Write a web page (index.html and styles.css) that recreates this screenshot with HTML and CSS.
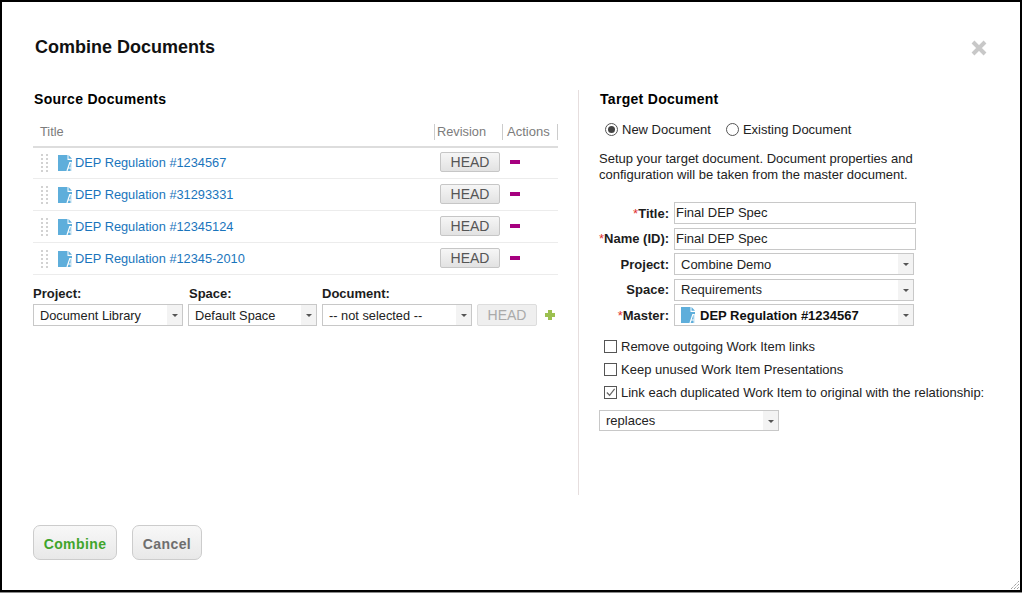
FILE: index.html
```html
<!DOCTYPE html>
<html lang="en">
<head>
<meta charset="utf-8">
<title>Combine Documents</title>
<link rel="stylesheet" href="styles.css">
</head>
<body>
<svg class="defs" width="0" height="0" aria-hidden="true">
  <symbol id="doc" viewBox="0 0 14 16">
    <path d="M0 0H9.500V5H14V16H0Z" fill="#5eaedb"/>
    <path d="M10.500 0L14 3.800H10.500Z" fill="#5eaedb"/>
    <path d="M9 16L11.800 7.500H13.200V16" fill="none" stroke="#fff" stroke-width="1.200"/>
    <path d="M10 13H13" stroke="#fff" stroke-width="1"/>
  </symbol>
  <symbol id="grip" viewBox="0 0 7 18">
    <path d="M0 0h2v2H0zM5 0h2v2H5zM0 4h2v2H0zM5 4h2v2H5zM0 8h2v2H0zM5 8h2v2H5zM0 12h2v2H0zM5 12h2v2H5zM0 16h2v2H0zM5 16h2v2H5z" fill="#d2d2d2"/>
  </symbol>
</svg>
<main class="dialog">
  <header class="dialog-head">
    <h1>Combine Documents</h1>
    <svg class="close" viewBox="0 0 16 16" width="16" height="16"><path d="M2 2L14 14M14 2L2 14" stroke="#c8c8c8" stroke-width="4"/></svg>
  </header>
  <div class="columns">
    <section class="source">
      <h2>Source Documents</h2>
      <div class="thead">
        <div class="th th-title">Title</div>
        <div class="th th-rev">Revision</div>
        <div class="th th-act">Actions</div>
      </div>
      <div class="row">
        <svg class="grip"><use href="#grip"/></svg>
        <svg class="doc"><use href="#doc"/></svg>
        <a class="doc-link">DEP Regulation #1234567</a>
        <span class="rev"><button class="head-btn">HEAD</button></span>
        <span class="act"><i class="minus"></i></span>
      </div>
      <div class="row">
        <svg class="grip"><use href="#grip"/></svg>
        <svg class="doc"><use href="#doc"/></svg>
        <a class="doc-link">DEP Regulation #31293331</a>
        <span class="rev"><button class="head-btn">HEAD</button></span>
        <span class="act"><i class="minus"></i></span>
      </div>
      <div class="row">
        <svg class="grip"><use href="#grip"/></svg>
        <svg class="doc"><use href="#doc"/></svg>
        <a class="doc-link">DEP Regulation #12345124</a>
        <span class="rev"><button class="head-btn">HEAD</button></span>
        <span class="act"><i class="minus"></i></span>
      </div>
      <div class="row">
        <svg class="grip"><use href="#grip"/></svg>
        <svg class="doc"><use href="#doc"/></svg>
        <a class="doc-link">DEP Regulation #12345-2010</a>
        <span class="rev"><button class="head-btn">HEAD</button></span>
        <span class="act"><i class="minus"></i></span>
      </div>
      <div class="adder">
        <div class="field f-project">
          <label>Project:</label>
          <div class="select"><span class="val">Document Library</span><span class="arrow"></span></div>
        </div>
        <div class="field f-space">
          <label>Space:</label>
          <div class="select"><span class="val">Default Space</span><span class="arrow"></span></div>
        </div>
        <div class="field f-doc">
          <label>Document:</label>
          <div class="select"><span class="val">-- not selected --</span><span class="arrow"></span></div>
        </div>
        <button class="head-btn disabled">HEAD</button>
        <svg class="plus" viewBox="0 0 10 10" width="10" height="10"><path d="M3 0H7V3H10V7H7V10H3V7H0V3H3Z" fill="#9cc050"/></svg>
      </div>
    </section>
    <section class="target">
      <h2>Target Document</h2>
      <div class="radios">
        <span class="radio on"></span><span class="radio-label">New Document</span>
        <span class="radio"></span><span class="radio-label">Existing Document</span>
      </div>
      <p class="intro">Setup your target document. Document properties and configuration will be taken from the master document.</p>
      <div class="form">
        <label><b>*</b>Title:</label>
        <div class="input">Final DEP Spec</div>
        <label><b>*</b>Name (ID):</label>
        <div class="input">Final DEP Spec</div>
        <label>Project:</label>
        <div class="select wide"><span class="val">Combine Demo</span><span class="arrow"></span></div>
        <label>Space:</label>
        <div class="select wide"><span class="val">Requirements</span><span class="arrow"></span></div>
        <label><b>*</b>Master:</label>
        <div class="select wide"><span class="val strong"><svg class="doc"><use href="#doc"/></svg>DEP Regulation #1234567</span><span class="arrow"></span></div>
      </div>
      <div class="checks">
        <div class="check"><span class="box"></span>Remove outgoing Work Item links</div>
        <div class="check"><span class="box"></span>Keep unused Work Item Presentations</div>
        <div class="check"><span class="box"><svg viewBox="0 0 12 12" width="11" height="11"><path d="M2 6L5 9L10.500 2" fill="none" stroke="#666" stroke-width="1.300"/></svg></span>Link each duplicated Work Item to original with the relationship:</div>
      </div>
      <div class="select rel"><span class="val">replaces</span><span class="arrow"></span></div>
    </section>
  </div>
  <footer class="actions">
    <button class="btn primary">Combine</button>
    <button class="btn">Cancel</button>
  </footer>
  <svg class="resize" viewBox="0 0 8 8" width="8" height="8"><path d="M0 8L8 0M3 8L8 3M6 8L8 6" stroke="#777" stroke-width="1" stroke-dasharray="1 1"/></svg>
</main>
</body>
</html>
```
FILE: styles.css
```css
* { box-sizing: border-box; }
html, body { margin: 0; padding: 0; }
body {
  width: 1022px;
  height: 593px;
  overflow: hidden;
  background: #8a8a8a;
  font-family: "Liberation Sans", Arial, sans-serif;
  font-size: 13px;
  color: #222;
}
.defs { position: absolute; }
.dialog {
  position: relative;
  width: 1022px;
  height: 592px;
  background: #fff;
  border: 2px solid #000;
  padding: 0 0 0 31px;
}
.dialog-head {
  display: flex;
  justify-content: space-between;
  align-items: center;
  height: 88px;
  padding: 0 33px 0 2px;
}
h1 {
  margin: 3px 0 0;
  font-size: 18px;
  font-weight: bold;
  color: #111;
}
.close { margin-top: 4px; }
h2 {
  margin: 0;
  font-size: 14px;
  font-weight: bold;
  letter-spacing: 0.300px;
  color: #000;
  line-height: 18px;
}
.columns { display: flex; height: 405px; }
.source {
  width: 525px;
  margin-right: 20px;
  font-size: 12.800px;
}
.source h2 { padding-left: 1px; font-size: 14px; }
.thead {
  display: flex;
  align-items: center;
  height: 38px;
  border-bottom: 2px solid #ddd;
  margin-top: 2px;
  color: #7c7c7c;
  padding-top: 9px;
  padding-bottom: 1px;
}
.th { height: 16px; line-height: 16px; }
.th-title { width: 401px; padding-left: 7px; }
.th-rev { width: 68px; padding-left: 2px; border-left: 1px solid #ccc; }
.th-act { width: 56px; padding-left: 4px; border-left: 1px solid #ccc; border-right: 1px solid #ccc; font-size: 13px; }
.row {
  display: flex;
  align-items: center;
  height: 32px;
  border-bottom: 1px solid #ececec;
  padding-left: 8px;
}
.thead + .row { height: 31px; padding-bottom: 1px; }
.grip { width: 7px; height: 18px; flex: none; }
.doc { width: 14px; height: 16px; flex: none; }
.row .doc { margin-left: 10px; margin-right: 3px; }
.doc-link { color: #1a75bc; width: 360px; white-space: nowrap; }
.rev { width: 70px; padding-left: 5px; margin-bottom: 1px; }
.act { width: 37px; padding-left: 5px; }
.minus { display: block; width: 10px; height: 4px; background: #a6007f; margin-bottom: 1px; }
.head-btn {
  width: 60px;
  height: 20px;
  padding: 0;
  border: 1px solid #c6c6c6;
  border-radius: 2px;
  background: linear-gradient(#f6f6f6, #e2e2e2);
  font: 14px "Liberation Sans", Arial, sans-serif;
  color: #555;
}
.head-btn.disabled { height: 22px; color: #aaa; background: #efefef; border-color: #ddd; margin-left: 5px; }
.adder { display: flex; align-items: flex-end; margin-top: 11px; }
.field { display: flex; flex-direction: column; margin-right: 5px; }
.field label, .form label { font-weight: bold; color: #1c1c1c; font-size: 13px; }
.field label { height: 18px; line-height: 16px; }
.f-space label { padding-left: 1px; }
.f-project { width: 150px; }
.f-space { width: 129px; }
.f-doc { width: 150px; margin-right: 0; }
.select {
  display: flex;
  align-items: center;
  justify-content: space-between;
  height: 22px;
  border: 1px solid #c8c8c8;
  background: #fff;
  color: #222;
  white-space: nowrap;
}
.val { padding-left: 6px; display: flex; align-items: center; }
.arrow {
  position: relative;
  flex: none;
  width: 15px;
  height: 100%;
  background: #f3f3f3;
}
.arrow::after {
  content: "";
  position: absolute;
  left: 5px;
  top: 9px;
  border: 3px solid transparent;
  border-top: 3px solid #555;
  border-bottom: 0;
}
.plus { margin: 0 0 6px 8px; }
.target { width: 400px; padding-left: 20px; border-left: 1px solid #e6dede; }
.target h2 { margin: 0 0 0 1px; }
.radios { display: flex; align-items: center; height: 18px; margin-top: 12px; padding-left: 6px; color: #222; }
.radio {
  width: 13px;
  height: 13px;
  border: 1px solid #555;
  border-radius: 50%;
  background: #fff;
  flex: none;
  display: flex;
  align-items: center;
  justify-content: center;
}
.radio.on::after { content: ""; width: 7px; height: 7px; border-radius: 50%; background: #444; }
.radio-label { margin: 0 15px 0 4px; }
.intro { margin: 13px 0 0; line-height: 16px; width: 340px; }
.form {
  display: grid;
  grid-template-columns: 70px 242px;
  column-gap: 5px;
  row-gap: 3.500px;
  margin-top: 19px;
  align-items: center;
}
.form label { text-align: right; white-space: nowrap; }
.form b { color: #e03030; font-weight: normal; }
.input { height: 22px; line-height: 20px; border: 1px solid #c8c8c8; padding-left: 1px; }
.select.wide { width: 240px; }
.strong { font-weight: bold; font-size: 13px; color: #111; }
.strong .doc { margin-right: 5px; }
.checks { margin-top: 9px; padding-left: 5px; }
.check { display: flex; align-items: center; height: 23px; white-space: nowrap; }
.box {
  width: 13px;
  height: 13px;
  border: 1px solid #555;
  margin-right: 4px;
  flex: none;
  display: flex;
  align-items: center;
  justify-content: center;
}
.select.rel { width: 180px; margin-top: 6px; height: 21px; }
.actions { display: flex; gap: 15px; margin-top: 30px; }
.btn {
  height: 35px;
  width: 70px;
  padding: 2px 0 0;
  border: 1px solid #ccc;
  border-radius: 7px;
  background: linear-gradient(#f8f8f8, #e8e8e8);
  font: bold 14px "Liberation Sans", Arial, sans-serif;
  letter-spacing: 0.400px;
  color: #6e6e6e;
}
.btn.primary { width: 84px; color: #3fa52c; }
.resize { position: absolute; right: 1px; bottom: 1px; }
```
